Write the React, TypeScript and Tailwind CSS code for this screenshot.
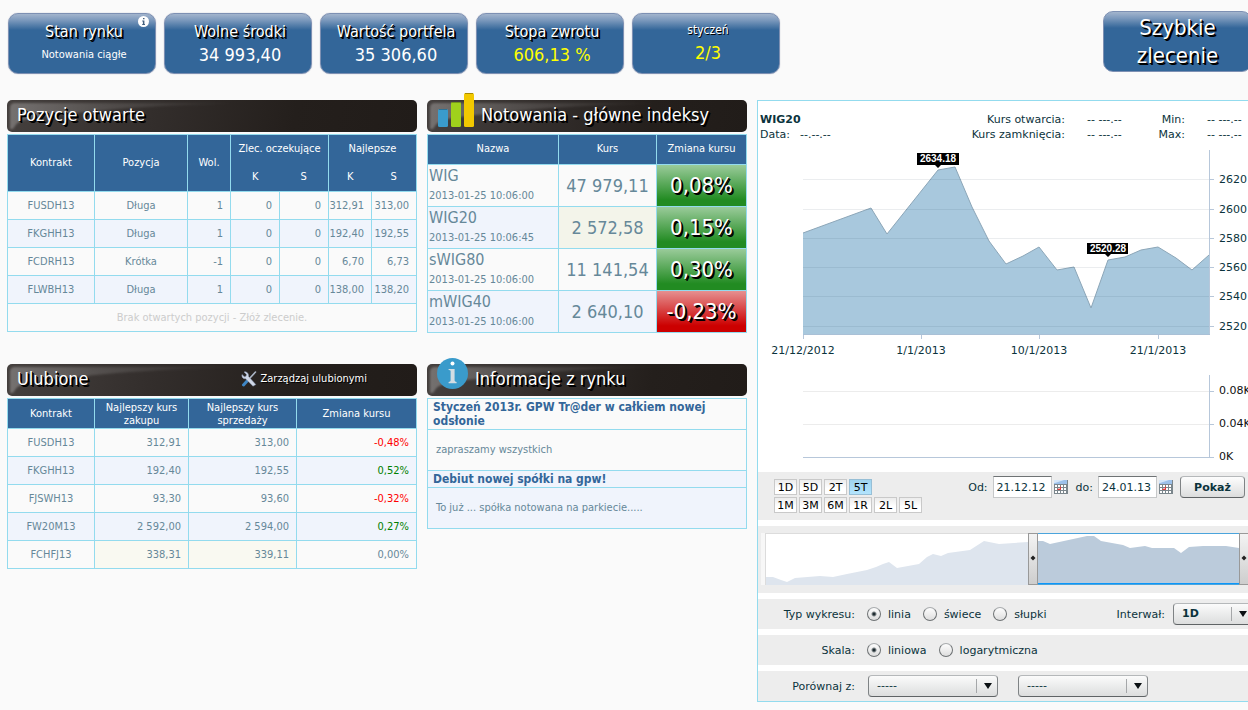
import type { ReactNode } from 'react';

const tahoma = "font-['DejaVu_Sans_Condensed','Noto_Sans',sans-serif]";
const verdana = "font-['DejaVu_Sans',sans-serif]";

const positions = [
  ['FUSDH13', 'Długa', '1', '0', '0', '312,91', '313,00'],
  ['FKGHH13', 'Długa', '1', '0', '0', '192,40', '192,55'],
  ['FCDRH13', 'Krótka', '-1', '0', '0', '6,70', '6,73'],
  ['FLWBH13', 'Długa', '1', '0', '0', '138,00', '138,20'],
];

const favourites = [
  { name: 'FUSDH13', buy: '312,91', sell: '313,00', change: '-0,48%', tone: 'text-[#ff0000]' },
  { name: 'FKGHH13', buy: '192,40', sell: '192,55', change: '0,52%', tone: 'text-[#008000]' },
  { name: 'FJSWH13', buy: '93,30', sell: '93,60', change: '-0,32%', tone: 'text-[#ff0000]' },
  { name: 'FW20M13', buy: '2 592,00', sell: '2 594,00', change: '0,27%', tone: 'text-[#008000]' },
  { name: 'FCHFJ13', buy: '338,31', sell: '339,11', change: '0,00%', tone: '', flash: true },
];

const indices = [
  { name: 'WIG', time: '2013-01-25 10:06:00', rate: '47 979,11', change: '0,08%' },
  { name: 'WIG20', time: '2013-01-25 10:06:45', rate: '2 572,58', change: '0,15%', flash: true },
  { name: 'sWIG80', time: '2013-01-25 10:06:00', rate: '11 141,54', change: '0,30%' },
  { name: 'mWIG40', time: '2013-01-25 10:06:00', rate: '2 640,10', change: '-0,23%', down: true },
];

const ranges = [
  ['1D', '5D', '2T', '5T'],
  ['1M', '3M', '6M', '1R', '2L', '5L'],
];

const line = 'border-[#93dbee]';

function Tile({ title, small, children }: { title: string; small?: boolean; children: ReactNode }) {
  return (
    <div className="relative flex h-[61px] w-[148px] flex-col items-center rounded-[10px] border border-[#7d90b3] bg-[linear-gradient(to_bottom,#a3b5cd_0px,#7d9abd_6px,#336699_16px)] pt-[7px] pl-1 text-white shadow-[0_0_1px_#8a94ad]">
      <div
        className={
          small
            ? 'h-5 text-[12px] leading-[18px] [text-shadow:1px_1px_0_#000]'
            : 'h-[22px] text-[16px] leading-[22px] [text-shadow:1px_1px_0_#000,2px_2px_0_#000]'
        }
      >
        {title}
      </div>
      {children}
    </div>
  );
}

function SectionHeader({ children }: { children: ReactNode }) {
  return (
    <div className="relative mb-0.5 flex h-8 items-center rounded-[5px] bg-[linear-gradient(100deg,#45403e_0%,#332e2c_35%,#241f1c_70%,#211c19_100%)] pb-0.5 text-white">
      <svg
        className="absolute inset-0 h-8 w-[240px]"
        viewBox="0 0 240 32"
        preserveAspectRatio="none"
        aria-hidden="true"
      >
        <defs>
          <linearGradient id="gloss" x1="0" x2="1" y1="0" y2="0">
            <stop offset="0" stopColor="#fff" stopOpacity="0.26" />
            <stop offset="0.35" stopColor="#fff" stopOpacity="0.14" />
            <stop offset="1" stopColor="#fff" stopOpacity="0" />
          </linearGradient>
          <filter id="gloss-soft">
            <feGaussianBlur stdDeviation="1" />
          </filter>
        </defs>
        <path
          d="M3 29V8Q3 3 8 3H240Q160 5 110 9Q40 15 20 19Q10 21 6 29Z"
          fill="url(#gloss)"
          filter="url(#gloss-soft)"
        />
      </svg>
      {children}
    </div>
  );
}

function Title({ children }: { children: ReactNode }) {
  return (
    <h2 className="relative text-[18px] leading-6 [text-shadow:1px_1px_0_#000,2px_2px_0_#000]">{children}</h2>
  );
}

function Caret() {
  return (
    <span className="pointer-events-none absolute inset-y-1 right-0 flex w-[22px] items-center justify-center border-l border-[#a5a7a9]">
      <svg width="8" height="6" viewBox="0 0 8 6" aria-hidden="true">
        <path d="M0 0H8L4 6Z" fill="#0b1013" />
      </svg>
    </span>
  );
}

function Select({ label, value, width, bold }: { label: string; value: string; width: string; bold?: boolean }) {
  return (
    <span className={`relative block h-[22px] ${width}`}>
      <select
        aria-label={label}
        className={`block h-[22px] w-full appearance-none rounded-[4px] border border-[#7f8385] border-t-[#b5b8ba] border-b-[#5f6365] bg-[linear-gradient(to_bottom,#fbfbfb,#dcdddd)] pl-2 text-[11px] leading-4 text-[#0b333c] ${bold ? 'font-bold' : ''}`}
      >
        <option>{value}</option>
      </select>
      <Caret />
    </span>
  );
}

function Radio({ name, label, checked }: { name: string; label: string; checked?: boolean }) {
  return (
    <label className="flex items-center gap-[7px]">
      <input
        type="radio"
        name={name}
        defaultChecked={checked}
        className="h-[14px] w-[14px] appearance-none rounded-full border border-[#6e7274] border-t-[#a9acae] bg-[linear-gradient(to_bottom,#fdfdfd,#dedede)] checked:bg-[radial-gradient(circle,#1f2c31_0px,#1f2c31_1px,transparent_3px),linear-gradient(to_bottom,#fdfdfd,#dedede)]"
      />
      {label}
    </label>
  );
}

function CalendarIcon() {
  return (
    <svg width="14" height="14" viewBox="0 0 14 14" aria-hidden="true">
      <rect width="14" height="14" fill="#7b868c" />
      <rect width="13" height="4" fill="#9cc0ea" />
      <path d="M0 0H10L1 3H0Z" fill="#d5e6f8" />
      {[4, 7, 10].map((y) =>
        [1, 4, 7, 10].map((x) => (
          <rect key={`${x}-${y}`} x={x} y={y + 1} width="2" height="2" fill={x === 4 && y === 7 ? '#f6b4b4' : '#fff'} />
        )),
      )}
      <path d="M3.5 9.5H6.5V6.5" stroke="#e33b3b" fill="none" />
    </svg>
  );
}

function DateField({ label, value, id }: { label: string; value: string; id: string }) {
  return (
    <div className="flex items-center">
      <label htmlFor={id} className="mr-[5px]">
        {label}
      </label>
      <input
        id={id}
        type="text"
        defaultValue={value}
        className="h-[22px] w-[59px] border border-[#c6c8c9] border-t-[#6f7375] bg-white px-[3px] text-[11px] leading-4 text-[#0b333c]"
      />
      <button type="button" aria-label="Kalendarz" className="ml-0.5">
        <CalendarIcon />
      </button>
    </div>
  );
}

function ToolsIcon() {
  return (
    <svg width="16" height="16" viewBox="0 0 16 16" aria-hidden="true">
      <path d="M14.5 1L8 8" stroke="#aab4c4" strokeWidth="1.6" strokeLinecap="round" />
      <path d="M7.5 8.5L2.5 14" stroke="#3f86c4" strokeWidth="3" strokeLinecap="round" />
      <path
        d="M3 1L5.5 3.5L5 5.3L3.4 5.8L1 3.5C0.4 5.5 1.6 8 4.6 7.8L12 15.2L14.8 13.6L7.6 5.6C8 2.6 5.6 0.2 3 1Z"
        fill="#d0d7e6"
        stroke="#8391ad"
        strokeWidth="0.5"
      />
    </svg>
  );
}

const pricePoints =
  '45,90 113,65 129,91 180,27 197,24 214,64 231,98 248,121 265,113 281,104 299,127 316,124 333,165 350,117 367,114 383,107 400,104 418,115 434,127 451,112';

const priceAxis = [
  { y: 36, label: '2620' },
  { y: 66, label: '2600' },
  { y: 95, label: '2580' },
  { y: 124, label: '2560' },
  { y: 153, label: '2540' },
  { y: 183, label: '2520' },
];

const dateAxis = [
  { x: 45, label: '21/12/2012' },
  { x: 163, label: '1/1/2013' },
  { x: 281, label: '10/1/2013' },
  { x: 400, label: '21/1/2013' },
];

const volumeAxis = [
  { y: 248, label: '0.08K' },
  { y: 281, label: '0.04K' },
  { y: 314, label: '0K' },
];

function PriceChart() {
  return (
    <svg width="499" height="329" viewBox="0 0 499 329" className="block text-[11px]" role="img" aria-label="WIG20">
      <polygon points={`45,192 ${pricePoints} 451,192`} fill="#a8c8dd" />
      <polyline points={pricePoints} fill="none" stroke="#8ca6b8" />
      {priceAxis.map(({ y, label }) => (
        <g key={label}>
          <rect x="45" y={y} width="406" height="1" fill="#1c3c50" fillOpacity="0.09" />
          <rect x="451" y={y} width="5" height="1" fill="#b7c7da" />
          <text x="461" y={y + 4} fill="#0b333c">
            {label}
          </text>
        </g>
      ))}
      <rect x="451" y="7" width="1" height="185" fill="#b7c7da" />
      <rect x="45" y="191" width="407" height="1" fill="#a9c0d6" />
      {dateAxis.map(({ x, label }) => (
        <g key={label}>
          <rect x={x} y="192" width="1" height="4" fill="#b7c7da" />
          <text x={x} y="211" textAnchor="middle" fill="#0b333c">
            {label}
          </text>
        </g>
      ))}
      {volumeAxis.map(({ y, label }) => (
        <g key={label}>
          <rect x="45" y={y} width="406" height="1" fill={label === '0K' ? '#b7c7da' : '#ececec'} />
          <rect x="451" y={y} width="5" height="1" fill="#b7c7da" />
          <text x="461" y={y + 3} fill="#111">
            {label}
          </text>
        </g>
      ))}
      <rect x="451" y="232" width="1" height="83" fill="#b7c7da" />
      <g className="font-['Liberation_Sans',sans-serif] text-[10px] font-bold">
        <path d="M159 10H201V22H183L180 25L177 22H159Z" fill="#000" />
        <text x="180" y="19" textAnchor="middle" fill="#fff">
          2634.18
        </text>
        <path d="M329 100H370V111H353L350 114L347 111H329Z" fill="#000" />
        <text x="350" y="109" textAnchor="middle" fill="#fff">
          2520.28
        </text>
      </g>
    </svg>
  );
}

function Navigator() {
  return (
    <svg width="499" height="67" viewBox="0 0 499 67" className="block" aria-hidden="true">
      <defs>
        <linearGradient id="grip" x1="0" x2="0" y1="0" y2="1">
          <stop offset="0" stopColor="#f4f4f4" />
          <stop offset="1" stopColor="#cdcdcd" />
        </linearGradient>
      </defs>
      <rect x="3" y="7" width="4" height="52" fill="#f7f7f7" />
      <rect x="7" y="7" width="480" height="52" fill="#dcdcdc" />
      <rect x="8" y="8" width="480" height="51" fill="#fff" />
      <polygon
        fill="#dee5ee"
        points="8,59 8,51 15,51 23,54 29,56 37,52 62,50 75,51 89,48 109,44 118,41 125,38 131,36 139,42 161,38 169,31 175,28 183,30 190,27 212,24 226,15 241,18 270,16 270,59"
      />
      <polygon
        fill="#bbcbdb"
        points="280,59 280,15 285,15 292,18 329,10 336,10 343,15 365,19 372,22 387,20 394,22 416,22 423,27 431,21 445,20 468,20 481,22 481,59"
      />
      <rect x="280" y="7" width="201" height="1" fill="#4ba4dc" />
      <rect x="280" y="57" width="201" height="1" fill="#0a97fb" />
      <rect x="280" y="58" width="201" height="1" fill="#4ba4dc" />
      {[270, 481].map((x) => (
        <g key={x}>
          <rect x={x + 0.5} y="7.5" width="9" height="51" fill="url(#grip)" stroke="#999" />
          <path d={`M${x + 5} 29.5L${x + 7.5} 32L${x + 5} 34.5L${x + 2.5} 32Z`} fill="#222" />
        </g>
      ))}
    </svg>
  );
}

function Positions() {
  const group = `border-x border-t ${line} font-normal`;
  return (
    <table className={`w-full table-fixed border-collapse border ${line} text-[11px] leading-[14px] text-[#668899]`}>
      <colgroup>
        <col className="w-[87px]" />
        <col className="w-[93px]" />
        <col className="w-[43px]" />
        <col className="w-[49px]" />
        <col className="w-[49px]" />
        <col className="w-[43px]" />
        <col />
      </colgroup>
      <thead className="bg-[#336699] text-white">
        <tr className="h-[29px]">
          <th rowSpan={2} className={`border ${line} font-normal`}>Kontrakt</th>
          <th rowSpan={2} className={`border ${line} font-normal`}>Pozycja</th>
          <th rowSpan={2} className={`border ${line} font-normal`}>Wol.</th>
          <th colSpan={2} className={group}>Zlec. oczekujące</th>
          <th colSpan={2} className={group}>Najlepsze</th>
        </tr>
        <tr className="h-7">
          <th className={`border-l ${line} font-normal`}>K</th>
          <th className={`border-r ${line} font-normal`}>S</th>
          <th className={`border-l ${line} font-normal`}>K</th>
          <th className={`border-r ${line} font-normal`}>S</th>
        </tr>
      </thead>
      <tbody>
        {positions.map((row) => (
          <tr key={row[0]} className="h-7 even:bg-[#f0f4fc]">
            {row.map((cell, i) => (
              <td key={i} className={`border ${line} ${i < 2 ? 'text-center' : 'pr-[7px] text-right'}`}>
                {cell}
              </td>
            ))}
          </tr>
        ))}
        <tr className="h-7">
          <td colSpan={7} className={`border ${line} text-center text-[#cccccc]`}>
            Brak otwartych pozycji - Złóż zlecenie.
          </td>
        </tr>
      </tbody>
    </table>
  );
}

function Favourites() {
  return (
    <table className={`w-full table-fixed border-collapse border ${line} text-[11px] leading-[13px] text-[#668899]`}>
      <colgroup>
        <col className="w-[87px]" />
        <col className="w-[94px]" />
        <col className="w-[108px]" />
        <col />
      </colgroup>
      <thead className="bg-[#336699] text-white">
        <tr className="h-[30px]">
          {['Kontrakt', 'Najlepszy kurs zakupu', 'Najlepszy kurs sprzedaży', 'Zmiana kursu'].map((h) => (
            <th key={h} className={`border ${line} px-2 font-normal`}>{h}</th>
          ))}
        </tr>
      </thead>
      <tbody>
        {favourites.map((f) => (
          <tr key={f.name} className="h-7 even:bg-[#f0f4fc]">
            <td className={`border ${line} text-center`}>{f.name}</td>
            <td className={`border ${line} pr-[7px] text-right ${f.flash ? 'bg-[#f9f9f1]' : ''}`}>{f.buy}</td>
            <td className={`border ${line} pr-[7px] text-right ${f.flash ? 'bg-[#f9f9f1]' : ''}`}>{f.sell}</td>
            <td className={`border ${line} pr-[7px] text-right ${f.tone}`}>{f.change}</td>
          </tr>
        ))}
      </tbody>
    </table>
  );
}

function Indices() {
  return (
    <table className={`w-full table-fixed border-collapse border ${line} text-[11px] text-[#668899]`}>
      <colgroup>
        <col className="w-[131px]" />
        <col className="w-[98px]" />
        <col />
      </colgroup>
      <thead className="bg-[#336699] text-white">
        <tr className="h-[30px]">
          {['Nazwa', 'Kurs', 'Zmiana kursu'].map((h) => (
            <th key={h} className={`border ${line} font-normal`}>{h}</th>
          ))}
        </tr>
      </thead>
      <tbody>
        {indices.map((r) => (
          <tr key={r.name} className="h-[42px] even:bg-[#f0f4fc]">
            <td className={`border ${line} pl-px`}>
              <div className="text-[16px] leading-5">{r.name}</div>
              <div className="leading-5">{r.time}</div>
            </td>
            <td className={`border ${line} text-center text-[18px] ${r.flash ? 'bg-[#f3f4ea]' : ''}`}>{r.rate}</td>
            <td
              className={`border ${line} bg-no-repeat text-center text-[22px] text-white [text-shadow:1px_1px_0_#000,2px_2px_0_#000] ${
                r.down
                  ? 'bg-[#cc0000] bg-[linear-gradient(to_bottom,#e69090,#cc0000_85%)]'
                  : 'bg-[#228b22] bg-[linear-gradient(to_bottom,#9acb9a,#228b22_85%)]'
              }`}
            >
              {r.change}
            </td>
          </tr>
        ))}
      </tbody>
    </table>
  );
}

function News() {
  const heading = 'px-[5px] text-[12px] leading-[14px] font-bold text-[#336699]';
  return (
    <div className={`border ${line} text-[11px] text-[#668899]`}>
      <h3 className={`${heading} border-b py-px ${line}`}>Styczeń 2013r. GPW Tr@der w całkiem nowej odsłonie</h3>
      <p className={`border-b ${line} px-2 py-3 leading-4`}>zapraszamy wszystkich</p>
      <div className="bg-[#f0f4fc]">
        <h3 className={`${heading} border-b py-px ${line}`}>Debiut nowej spółki na gpw!</h3>
        <p className="px-2 py-3 leading-4">To już ... spółka notowana na parkiecie.....</p>
      </div>
    </div>
  );
}

function ChartPanel() {
  const label = 'w-[97px] text-right';
  return (
    <section
      className={`min-w-[501px] flex-1 self-start overflow-hidden border ${line} bg-white text-[11px] leading-[15px] text-[#0b333c] ${verdana}`}
    >
      <div className="flex justify-between pt-[11px] pb-px pl-0.5">
        <div>
          <div className="font-bold">WIG20</div>
          <div className="flex gap-2.5">
            <span>Data:</span>
            <span>--.--.--</span>
          </div>
        </div>
        <div className="flex">
          <div className="mr-[22px] text-right">
            <div>Kurs otwarcia:</div>
            <div>Kurs zamknięcia:</div>
          </div>
          <div className="w-[43px]">
            <div>-- ---.--</div>
            <div>-- ---.--</div>
          </div>
          <div className="mr-[22px] w-[55px] text-right">
            <div>Min:</div>
            <div>Max:</div>
          </div>
          <div className="w-[50px]">
            <div>-- ---.--</div>
            <div>-- ---.--</div>
          </div>
        </div>
      </div>
      <PriceChart />
      <div className="flex flex-col gap-1.5">
        <div className="flex h-12 items-start justify-between bg-[#ededed] pr-3 pl-4">
          <div className="flex flex-col gap-0.5 pt-[7px]">
            {ranges.map((row) => (
              <div key={row[0]} className="flex gap-0.5">
                {row.map((r) => (
                  <button
                    key={r}
                    type="button"
                    className={`h-4 w-[23px] border text-[11px] leading-[13px] text-black ${
                      r === '5T'
                        ? 'border-[#97bfd6] bg-[linear-gradient(to_bottom,#9fd3ee,#b3e4fd)]'
                        : 'border-[#c9c9c9] bg-[linear-gradient(to_bottom,#ececec,#ffffff_60%)]'
                    }`}
                  >
                    {r}
                  </button>
                ))}
              </div>
            ))}
          </div>
          <div className="flex items-center pt-1">
            <DateField id="from" label="Od:" value="21.12.12" />
            <div className="w-2" />
            <DateField id="to" label="do:" value="24.01.13" />
            <button
              type="button"
              className="ml-[7px] h-[22px] w-[65px] rounded-[4px] border border-[#7f8385] border-t-[#b5b8ba] border-b-[#5f6365] bg-[linear-gradient(to_bottom,#fdfdfd,#dcdddd)] font-bold"
            >
              Pokaż
            </button>
          </div>
        </div>
        <div className="bg-[#ededed]">
          <Navigator />
        </div>
        <div className="flex h-[30px] items-center gap-3 bg-[#ededed] pr-1">
          <div className={label}>Typ wykresu:</div>
          <Radio name="type" label="linia" checked />
          <Radio name="type" label="świece" />
          <Radio name="type" label="słupki" />
          <div className="ml-auto flex items-center gap-2">
            <span>Interwał:</span>
            <Select label="Interwał" value="1D" width="w-20" bold />
          </div>
        </div>
        <div className="flex h-[30px] items-center gap-3 bg-[#ededed]">
          <div className={label}>Skala:</div>
          <Radio name="scale" label="liniowa" checked />
          <Radio name="scale" label="logarytmiczna" />
        </div>
        <div className="flex h-[30px] items-center bg-[#ededed]">
          <div className={`${label} mr-[13px]`}>Porównaj z:</div>
          <Select label="Porównaj z" value="-----" width="w-[130px]" />
          <div className="w-5" />
          <Select label="Porównaj także z" value="-----" width="w-[130px]" />
        </div>
      </div>
    </section>
  );
}

export default function App() {
  return (
    <div className={`min-h-screen overflow-hidden bg-[#fafafa] ${tahoma}`}>
      <div className="min-w-[1258px]">
        <header className="flex items-start gap-2 pt-[11px] pr-1.5 pl-2">
          <div className="flex gap-2 pt-0.5">
            <Tile title="Stan rynku">
              <div className="text-[11px] leading-6">Notowania ciągłe</div>
              <svg className="absolute top-0.5 right-1.5" width="11" height="11" viewBox="0 0 11 11" aria-hidden="true">
                <circle cx="5.5" cy="5.5" r="5.5" fill="#fff" />
                <path d="M5 2H6.5V3.3H5ZM4.2 4.4H6.4V8H7V9H4.2V8H4.9V5.4H4.2Z" fill="#44607e" />
              </svg>
            </Tile>
            <Tile title="Wolne środki">
              <div className="text-[18px] leading-6">34 993,40</div>
            </Tile>
            <Tile title="Wartość portfela">
              <div className="text-[18px] leading-6">35 306,60</div>
            </Tile>
            <Tile title="Stopa zwrotu">
              <div className="text-[18px] leading-6 text-[#ffff00]">606,13 %</div>
            </Tile>
            <Tile title="styczeń" small>
              <div className="text-[18px] leading-6 text-[#ffff00]">2/3</div>
            </Tile>
          </div>
          <button
            type="button"
            className="ml-auto h-[61px] w-[149px] rounded-[10px] border border-[#7d90b3] bg-[linear-gradient(to_bottom,#a3b5cd_0px,#7d9abd_6px,#336699_16px)] px-6 text-[22px] leading-7 text-white [text-shadow:1px_1px_0_#000,2px_2px_0_#000]"
          >
            Szybkie zlecenie
          </button>
        </header>
        <main className="flex gap-2.5 pt-[26px] pl-[7px]">
          <div className="w-[410px] shrink-0">
            <SectionHeader>
              <div className="pl-2.5">
                <Title>Pozycje otwarte</Title>
              </div>
            </SectionHeader>
            <Positions />
            <div className="h-8" />
            <SectionHeader>
              <div className="flex w-full items-center justify-between pr-[50px] pl-2.5">
                <Title>Ulubione</Title>
                <a href="#ulubione" className="relative flex items-center gap-[3px] text-[11px] [text-shadow:1px_1px_0_#000]">
                  <ToolsIcon />
                  Zarządzaj ulubionymi
                </a>
              </div>
            </SectionHeader>
            <Favourites />
          </div>
          <div className="w-80 shrink-0">
            <SectionHeader>
              <svg className="absolute bottom-1 left-2.5" width="38" height="36" viewBox="0 0 38 36" aria-hidden="true">
                <rect x="1" y="17" width="10" height="18" rx="1.5" fill="#3a9bcb" />
                <rect x="2" y="17" width="8" height="1" fill="#2b7296" />
                <rect x="14" y="10" width="10" height="25" rx="1.5" fill="#9fd11c" />
                <rect x="15" y="10" width="8" height="1" fill="#76991a" />
                <rect x="27" y="1" width="10" height="34" rx="1.5" fill="#f2c800" />
                <rect x="28" y="1" width="8" height="1" fill="#a88b00" />
              </svg>
              <div className="pl-[54px]">
                <Title>Notowania - główne indeksy</Title>
              </div>
            </SectionHeader>
            <Indices />
            <div className="h-[31px]" />
            <SectionHeader>
              <svg className="absolute bottom-[7px] left-2.5" width="31" height="31" viewBox="0 0 31 31" aria-hidden="true">
                <circle cx="15.5" cy="15.5" r="15.5" fill="#3a9bcb" />
                <circle cx="15.5" cy="5.6" r="2" fill="#fff" />
                <path d="M11.6 11H17.6V22.6Q17.6 23.8 19.6 24V25.2H11.6V24Q13.6 23.8 13.6 22.6V13Q13.6 12.2 11.6 12.1Z" fill="#d3dde3" />
              </svg>
              <div className="pl-12">
                <Title>Informacje z rynku</Title>
              </div>
            </SectionHeader>
            <News />
          </div>
          <ChartPanel />
        </main>
      </div>
    </div>
  );
}
